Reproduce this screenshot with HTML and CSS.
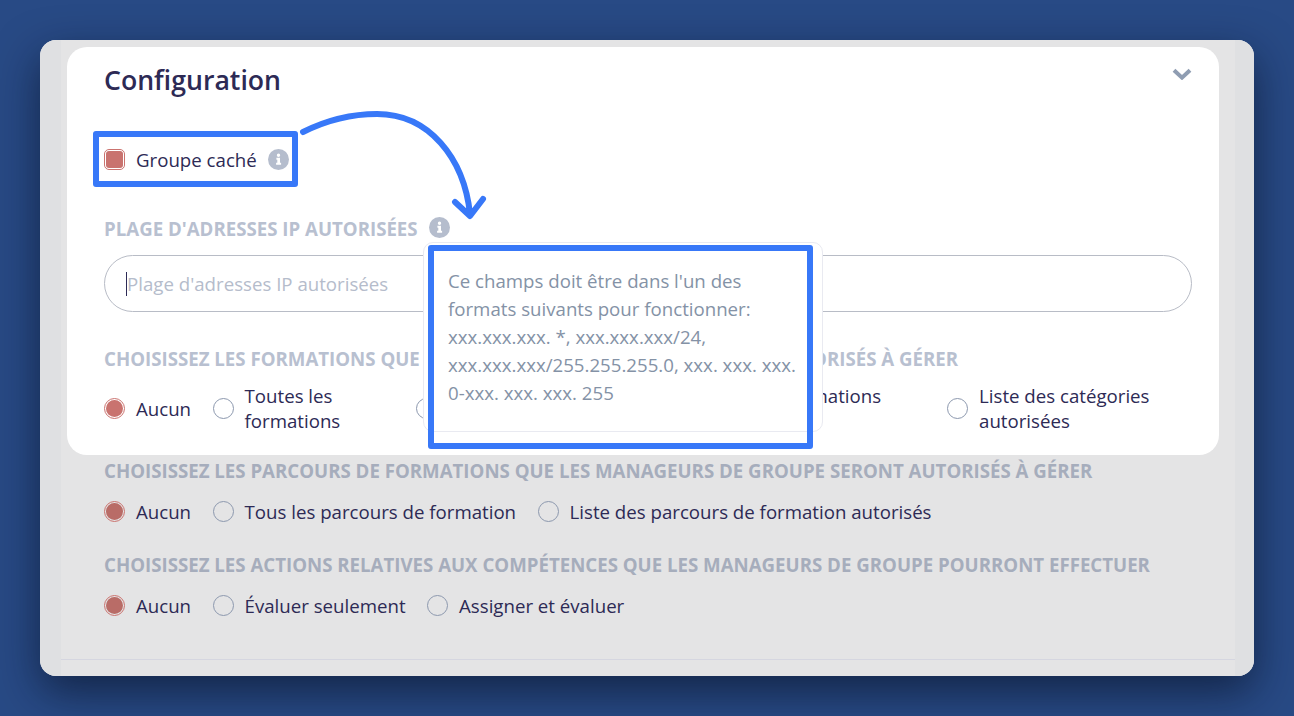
FILE: index.html
```html
<!DOCTYPE html>
<html lang="fr">
<head>
<meta charset="utf-8">
<title>Configuration</title>
<link rel="stylesheet" href="styles.css">
</head>
<body>
<div class="window">
  <div class="strip strip-left"></div>
  <main class="main">
    <section class="card">
      <header class="card-head">
        <h2 class="title">Configuration</h2>
        <svg class="chevron" width="20" height="12" viewBox="0 0 20 12"><path d="M2 2.2 10 9.6 18 2.2" fill="none" stroke="#8f9db2" stroke-width="4"/></svg>
      </header>
      <div class="check-row">
        <span class="checkbox"></span>
        <span class="opt-text">Groupe caché</span>
        <svg class="info" width="21" height="21" viewBox="0 0 21 21"><circle cx="10.5" cy="10.5" r="10.5" fill="#b5bdcd"/><path d="M8.4 8.8h3.6v5h1.1v1.9H8.1v-1.9h1.2v-3.1H8.4zM10.5 4.6a1.7 1.7 0 1 1 0 3.4 1.7 1.7 0 0 1 0-3.4z" fill="#fff"/></svg>
      </div>
      <div class="label-row">
        <span class="label label-light">PLAGE D'ADRESSES IP AUTORISÉES</span>
        <svg class="info" width="21" height="21" viewBox="0 0 21 21"><circle cx="10.5" cy="10.5" r="10.5" fill="#b5bdcd"/><path d="M8.4 8.8h3.6v5h1.1v1.9H8.1v-1.9h1.2v-3.1H8.4zM10.5 4.6a1.7 1.7 0 1 1 0 3.4 1.7 1.7 0 0 1 0-3.4z" fill="#fff"/></svg>
      </div>
      <div class="input">
        <span class="caret"></span>
        <span class="placeholder">Plage d'adresses IP autorisées</span>
      </div>
      <div class="label label-light label-formations">CHOISISSEZ LES FORMATIONS QUE LES MANAGEURS DE GROUPE SERONT AUTORISÉS À GÉRER</div>
      <div class="radios radios-card">
        <label class="opt"><span class="radio on"></span><span class="opt-text">Aucun</span></label>
        <label class="opt opt-all"><span class="radio"></span><span class="opt-text">Toutes les formations</span></label>
        <label class="opt opt-list"><span class="radio"></span><span class="opt-text">Liste des formations</span></label>
        <label class="opt opt-cats"><span class="radio"></span><span class="opt-text opt-cats-text">Catégories de formations autorisées</span></label>
        <label class="opt opt-last"><span class="radio"></span><span class="opt-text">Liste des catégories autorisées</span></label>
      </div>
    </section>
    <section class="group group-first">
      <div class="label">CHOISISSEZ LES PARCOURS DE FORMATIONS QUE LES MANAGEURS DE GROUPE SERONT AUTORISÉS À GÉRER</div>
      <div class="radios">
        <label class="opt"><span class="radio on dim"></span><span class="opt-text">Aucun</span></label>
        <label class="opt"><span class="radio"></span><span class="opt-text">Tous les parcours de formation</span></label>
        <label class="opt"><span class="radio"></span><span class="opt-text">Liste des parcours de formation autorisés</span></label>
      </div>
    </section>
    <section class="group">
      <div class="label">CHOISISSEZ LES ACTIONS RELATIVES AUX COMPÉTENCES QUE LES MANAGEURS DE GROUPE POURRONT EFFECTUER</div>
      <div class="radios">
        <label class="opt"><span class="radio on dim"></span><span class="opt-text">Aucun</span></label>
        <label class="opt"><span class="radio"></span><span class="opt-text">Évaluer seulement</span></label>
        <label class="opt"><span class="radio"></span><span class="opt-text">Assigner et évaluer</span></label>
      </div>
    </section>
    <div class="rule"></div>
  </main>
  <div class="strip strip-right"></div>

  <div class="tooltip">
    <p class="tooltip-text">Ce champs doit être dans l'un des formats suivants pour fonctionner: xxx.xxx.xxx. *, xxx.xxx.xxx/24, xxx.xxx.xxx/255.255.255.0, xxx. xxx. xxx. 0-xxx. xxx. xxx. 255</p>
  </div>
  <div class="mark mark-check"></div>
  <div class="mark mark-tooltip"></div>
  <svg class="arrow" width="200" height="120" viewBox="0 0 200 120"><path d="M4 26C28 14 55 8 78 8 130 8 165 52 171 108M156 96 171 110 184 93" fill="none" stroke="#3878f8" stroke-width="6" stroke-linecap="round" stroke-linejoin="round"/></svg>
</div>
</body>
</html>
```
FILE: styles.css
```css
* { box-sizing: border-box; }
html, body { height: 100%; }
body {
  margin: 0;
  padding: 40px;
  overflow: hidden;
  background: #284a85;
  font-family: "Open Sans", "Liberation Sans", sans-serif;
  color: #2d2a55;
}
.window {
  position: relative;
  display: flex;
  width: 1214px;
  height: 636px;
  border-radius: 16px;
  background: #e4e4e5;
  box-shadow: 0 16px 44px rgba(6, 14, 34, .62);
}
.strip { flex: none; background: #dfe0e2; }
.strip-left { width: 21px; border-radius: 16px 0 0 16px; }
.strip-right { width: 19px; border-radius: 0 16px 16px 0; }
.main { flex: 1; min-width: 0; padding-top: 7px; display: flex; flex-direction: column; }
.card {
  margin: 0 16px 0 6px;
  height: 408px;
  padding: 0 27px 0 37px;
  background: #fff;
  border-radius: 20px;
}
.card-head { display: flex; justify-content: space-between; align-items: flex-start; padding-top: 16px; height: 72px; }
.title { margin: 0; font-size: 26.67px; line-height: 34px; font-weight: 600; color: #2d2a55; }
.chevron { margin: 5px 0 0; }
.check-row { display: flex; align-items: center; height: 32px; margin-top: 24px; }
.checkbox {
  flex: none;
  width: 21px;
  height: 21px;
  padding: 1px;
  border: 1px solid #cb736f;
  border-radius: 5px;
  background: #c9736f content-box;
}
.opt-text { font-size: 18.67px; line-height: 25px; color: #2d2a55; }
.check-row .opt-text { margin-left: 11px; }
.check-row .info { margin-left: 11px; }
.label-row { display: flex; align-items: center; gap: 11px; margin-top: 42px; height: 24px; }
.label-row .info { margin-bottom: 3px; }
.label { font-size: 18.67px; line-height: 24px; font-weight: 700; color: #a6adbc; white-space: nowrap; }
.label-light { color: #b8c0d0; }
.input {
  display: flex;
  align-items: center;
  height: 57px;
  margin-top: 14px;
  padding-left: 21px;
  border: 1px solid #b8bcc6;
  border-radius: 29px;
}
.caret { width: 1px; height: 24px; background: #2d2a55; }
.placeholder { font-size: 18.67px; color: #b5bccb; }
.label-formations { margin-top: 35px; }
.radios { display: flex; align-items: center; gap: 21.5px; margin-top: 16px; }
.radios-card { margin-top: 12px; }
.opt { display: flex; align-items: center; gap: 11px; flex: none; }
.opt-all { width: 181.5px; }
.opt-list { width: 192.5px; }
.opt-cats { width: 296px; }
.opt-cats-text { width: 240px; }
.opt-last { width: 214px; }
.radio {
  flex: none;
  width: 21px;
  height: 21px;
  border: 1px solid #8c98ae;
  border-radius: 50%;
  background: #fff;
}
.group .radio { background: transparent; }
.radio.on, .group .radio.on {
  padding: 1px;
  border-color: #cb736f;
  background: #c9736f content-box;
}
.group .radio.dim { background: #b96c67 content-box; }
.group { padding: 0 0 0 43px; }
.group-first { margin-top: 4px; }
.group + .group { margin-top: 29px; }
.rule { margin-top: auto; margin-bottom: 16px; height: 1px; background: #d5d6e0; }
.tooltip {
  position: absolute;
  left: 383px;
  top: 202px;
  width: 400px;
  height: 190px;
  padding: 24px 19px 0 24px;
  background: #fff;
  border: 1px solid #e9eaf1;
  border-radius: 10px;
}
.tooltip-text { margin: 0; font-size: 18.67px; line-height: 28px; color: #8492a6; }
.mark {
  position: absolute;
  border: 6px solid #3878f8;
  border-radius: 3px;
}
.mark-check { left: 53px; top: 91px; width: 205px; height: 56px; }
.mark-tooltip { left: 388px; top: 205px; width: 385px; height: 204px; }
.arrow { position: absolute; left: 259px; top: 66px; }
```
